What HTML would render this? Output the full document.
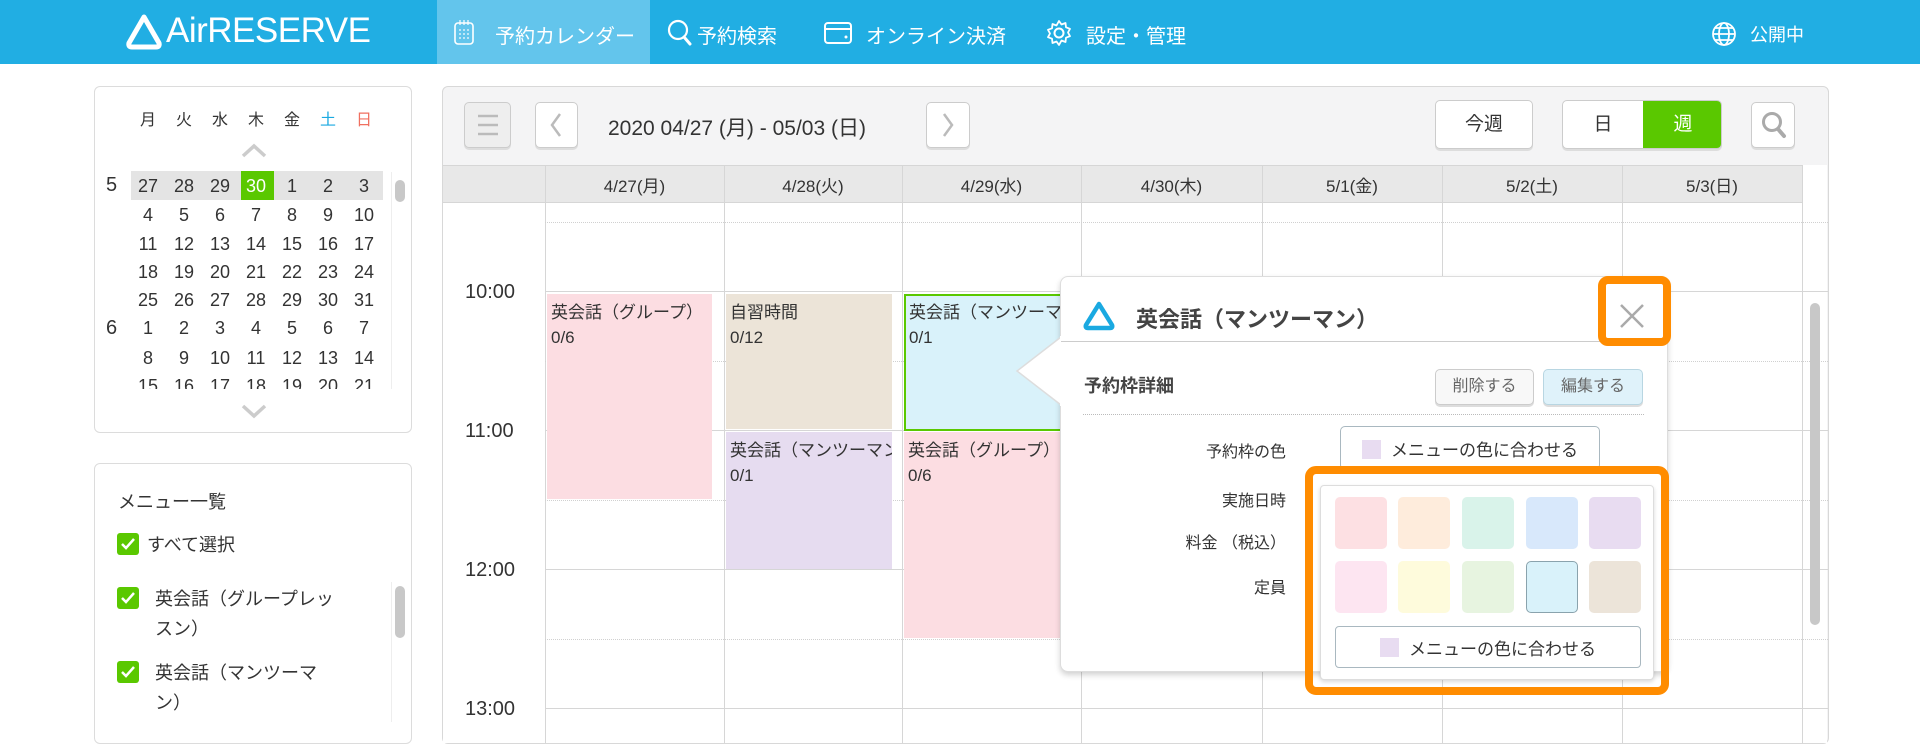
<!DOCTYPE html>
<html><head><meta charset="utf-8">
<style>
*{box-sizing:border-box;margin:0;padding:0}
body{width:1920px;height:750px;overflow:hidden;background:#fff;font-family:"Liberation Sans","Noto Sans CJK JP",sans-serif;color:#333;position:relative}
.a{position:absolute}
.hdr{left:0;top:0;width:1920px;height:64px;background:#21aee3}
.nav{color:#fff;font-size:20px;top:20px}
.card{border:1px solid #dcdcdc;border-radius:6px;background:#fff}
.btn{border:1px solid #ccc;border-radius:5px;background:#fff;box-shadow:0 2px 0 #ddd}
.ev{font-size:17px;line-height:25px;padding:6px 4px;overflow:hidden;white-space:nowrap}
.sw{width:52px;height:52px;border-radius:5px}
.cb{width:22px;height:22px;background:#5ac800;border-radius:3px}
.cb svg{position:absolute;left:3px;top:4px}
</style></head><body>
<div class="a hdr"></div>
<svg class="a" style="left:126px;top:13px" width="36" height="38" viewBox="0 0 36 38"><path d="M18 4 L33 30 Q34 34 30 34 L6 34 Q2 34 3 30 Z" fill="none" stroke="#fff" stroke-width="5" stroke-linejoin="round"/></svg>
<div class="a" style="left:166px;top:11px;color:#fff;font-size:35px;letter-spacing:-0.5px">AirRESERVE</div>
<div class="a" style="left:437px;top:0;width:213px;height:64px;background:#63c5ec"></div>
<svg class="a" style="left:454px;top:20px" width="20" height="26" viewBox="0 0 20 26"><rect x="1" y="3" width="18" height="21" rx="3" fill="none" stroke="#fff" stroke-width="1.6"/><g fill="#fff"><circle cx="6" cy="10" r=".9"/><circle cx="10" cy="10" r=".9"/><circle cx="14" cy="10" r=".9"/><circle cx="6" cy="14" r=".9"/><circle cx="10" cy="14" r=".9"/><circle cx="14" cy="14" r=".9"/><circle cx="6" cy="18" r=".9"/><circle cx="10" cy="18" r=".9"/><circle cx="14" cy="18" r=".9"/></g><path d="M6 0v5M10 0v5M14 0v5" stroke="#fff" stroke-width="1.2"/></svg>
<div class="a nav" style="left:495px">予約カレンダー</div>
<svg class="a" style="left:667px;top:19px" width="28" height="28" viewBox="0 0 28 28"><circle cx="11" cy="11" r="9" fill="none" stroke="#fff" stroke-width="2.2"/><path d="M17 18l6 7" stroke="#fff" stroke-width="3" stroke-linecap="round"/></svg>
<div class="a nav" style="left:697px">予約検索</div>
<svg class="a" style="left:824px;top:22px" width="28" height="22" viewBox="0 0 28 22"><rect x="1" y="1" width="26" height="20" rx="3" fill="none" stroke="#fff" stroke-width="2"/><path d="M1 7h26" stroke="#fff" stroke-width="2"/><circle cx="22" cy="15" r="1.5" fill="#fff"/></svg>
<div class="a nav" style="left:866px">オンライン決済</div>
<svg class="a" style="left:1045px;top:19px" width="28" height="28" viewBox="0 0 28 28"><circle cx="14" cy="14" r="4.5" fill="none" stroke="#fff" stroke-width="2"/><path d="M14 2l2.5 3.5 4-1.5.5 4.3 4 1.5-2 3.7 2 3.7-4 1.5-.5 4.3-4-1.5L14 26l-2.5-3.5-4 1.5-.5-4.3-4-1.5 2-3.7-2-3.7 4-1.5.5-4.3 4 1.5z" fill="none" stroke="#fff" stroke-width="1.8" stroke-linejoin="round"/></svg>
<div class="a nav" style="left:1086px">設定・管理</div>
<svg class="a" style="left:1711px;top:21px" width="26" height="26" viewBox="0 0 26 26" fill="none" stroke="#fff" stroke-width="1.8"><circle cx="13" cy="13" r="11"/><ellipse cx="13" cy="13" rx="5" ry="11"/><path d="M2 13h22M4 7h18M4 19h18"/></svg>
<div class="a nav" style="left:1750px;font-size:18px;top:21px">公開中</div>

<!-- mini calendar -->
<div class="a card" style="left:94px;top:86px;width:318px;height:347px"></div>
<div class="a" style="left:131px;top:171px;width:252px;height:29px;background:#e4e4e4"></div>
<div class="a" style="left:241px;top:171px;width:33px;height:29px;background:#5ac800"></div>
<div id="mc"></div>
<svg class="a" style="left:240px;top:143px" width="28" height="16"><path d="M3 13L14 3l11 10" fill="none" stroke="#ccc" stroke-width="3.5"/></svg>
<svg class="a" style="left:240px;top:403px" width="28" height="16"><path d="M3 3l11 10 11-10" fill="none" stroke="#ccc" stroke-width="3.5"/></svg>
<div class="a" style="left:395px;top:180px;width:10px;height:22px;border-radius:5px;background:#c8c8c8"></div>
<div class="a" style="left:391px;top:172px;width:1px;height:217px;background:#eee"></div>

<!-- menu card -->
<div class="a card" style="left:94px;top:463px;width:318px;height:281px"></div>
<div class="a" style="left:118px;top:488px;font-size:18px">メニュー一覧</div>
<div class="a cb" style="left:117px;top:533px"><svg width="16" height="14"><path d="M2 7l4 4 8-9" fill="none" stroke="#fff" stroke-width="2.5"/></svg></div>
<div class="a" style="left:147px;top:531px;font-size:18px">すべて選択</div>
<div class="a cb" style="left:117px;top:587px"><svg width="16" height="14"><path d="M2 7l4 4 8-9" fill="none" stroke="#fff" stroke-width="2.5"/></svg></div>
<div class="a" style="left:155px;top:584px;font-size:18px;line-height:30px;width:181px">英会話（グループレッスン）</div>
<div class="a cb" style="left:117px;top:661px"><svg width="16" height="14"><path d="M2 7l4 4 8-9" fill="none" stroke="#fff" stroke-width="2.5"/></svg></div>
<div class="a" style="left:155px;top:658px;font-size:18px;line-height:30px;width:181px">英会話（マンツーマン）</div>
<div class="a" style="left:391px;top:582px;width:1px;height:140px;background:#eee"></div>
<div class="a" style="left:395px;top:586px;width:10px;height:52px;border-radius:5px;background:#c8c8c8"></div>

<!-- main panel -->
<div class="a" style="left:442px;top:86px;width:1387px;height:658px;border:1px solid #d8d8d8;border-radius:6px;background:#f4f4f5;overflow:hidden">
</div>
<div class="a btn" style="left:464px;top:102px;width:47px;height:46px;background:#eee"></div>
<svg class="a" style="left:477px;top:113px" width="22" height="24"><path d="M1 3h20M1 12h20M1 21h20" stroke="#bbb" stroke-width="2.5"/></svg>
<div class="a btn" style="left:535px;top:102px;width:43px;height:46px"></div>
<svg class="a" style="left:548px;top:112px" width="16" height="26"><path d="M12 2L4 13l8 11" fill="none" stroke="#bbb" stroke-width="2.5"/></svg>
<div class="a" style="left:608px;top:112px;font-size:21px">2020 04/27 (月) - 05/03 (日)</div>
<div class="a btn" style="left:926px;top:102px;width:44px;height:46px"></div>
<svg class="a" style="left:940px;top:112px" width="16" height="26"><path d="M4 2l8 11-8 11" fill="none" stroke="#bbb" stroke-width="2.5"/></svg>
<div class="a btn" style="left:1435px;top:100px;width:98px;height:49px;text-align:center;line-height:47px;font-size:19px">今週</div>
<div class="a btn" style="left:1562px;top:100px;width:160px;height:49px;overflow:hidden"><div class="a" style="left:0;top:0;width:80px;height:47px;text-align:center;line-height:47px;font-size:19px">日</div><div class="a" style="left:80px;top:0;width:80px;height:47px;background:#5ac800;color:#fff;text-align:center;line-height:47px;font-size:19px">週</div></div>
<div class="a btn" style="left:1751px;top:102px;width:44px;height:46px"></div>
<svg class="a" style="left:1760px;top:110px" width="28" height="30"><circle cx="12" cy="12" r="8.5" fill="none" stroke="#aaa" stroke-width="3"/><path d="M18 19l6 7" stroke="#aaa" stroke-width="4" stroke-linecap="round"/></svg>

<!-- grid -->
<div class="a" style="left:443px;top:165px;width:1384px;height:578px;background:#fff"></div>
<div class="a" style="left:443px;top:165px;width:1359px;height:38px;background:#e8e8e8;border-top:1px solid #d6d6d6;border-bottom:1px solid #d6d6d6"></div>
<div class="a" style="left:443px;top:203px;width:102px;height:540px;background:#fff"></div>
<div id="grid"></div>
<div class="a" style="left:1810px;top:303px;width:10px;height:322px;border-radius:5px;background:#c8c8c8"></div>

<div class="a" style="left:465px;top:281px;font-size:20px">10:00</div>
<div class="a" style="left:465px;top:420px;font-size:20px">11:00</div>
<div class="a" style="left:465px;top:559px;font-size:20px">12:00</div>
<div class="a" style="left:465px;top:698px;font-size:20px">13:00</div>

<div class="a ev" style="left:547px;top:294px;width:165px;height:205px;background:#fcdde2">英会話（グループ）<br>0/6</div>
<div class="a ev" style="left:726px;top:294px;width:166px;height:135px;background:#ece4d8">自習時間<br>0/12</div>
<div class="a ev" style="left:726px;top:432px;width:166px;height:137px;background:#e6dcf0">英会話（マンツーマン）<br>0/1</div>
<div class="a ev" style="left:904px;top:294px;width:170px;height:137px;background:#d9f2fa;border:2px solid #5ac800;padding:4px 3px">英会話（マンツーマン）<br>0/1</div>
<div class="a ev" style="left:904px;top:432px;width:170px;height:206px;background:#fcdde2">英会話（グループ）<br>0/6</div>

<!-- popup -->
<div class="a" style="left:1060px;top:276px;width:608px;height:396px;background:#fff;border:1px solid #ddd;border-radius:8px;box-shadow:0 3px 6px rgba(0,0,0,.18)"></div>
<svg class="a" style="left:1014px;top:336px" width="48" height="70"><path d="M47 1L3 35l44 34" fill="#fff" stroke="#ddd" stroke-width="1.5"/><rect x="46" y="0" width="3" height="70" fill="#fff"/></svg>
<svg class="a" style="left:1082px;top:300px" width="34" height="32" viewBox="0 0 34 32"><path d="M17 4L30 25Q31 28 28 28L6 28Q3 28 4 25Z" fill="none" stroke="#1aa9e1" stroke-width="4.5" stroke-linejoin="round"/></svg>
<div class="a" style="left:1136px;top:302px;font-size:22px;font-weight:bold;color:#444">英会話（マンツーマン）</div>
<div class="a" style="left:1061px;top:341px;width:606px;height:1px;background:#ccc"></div>
<div class="a" style="left:1598px;top:276px;width:73px;height:70px;border:8px solid #ff8c00;border-radius:10px"></div>
<svg class="a" style="left:1618px;top:302px" width="28" height="28"><path d="M3 3l22 22M25 3L3 25" stroke="#aaa" stroke-width="2.5"/></svg>
<div class="a" style="left:1084px;top:372px;font-size:18px;font-weight:bold;color:#444">予約枠詳細</div>
<div class="a btn" style="left:1435px;top:369px;width:99px;height:36px;font-size:16px;text-align:center;line-height:34px;color:#666;background:#f8f8f8">削除する</div>
<div class="a btn" style="left:1543px;top:369px;width:100px;height:36px;font-size:16px;text-align:center;line-height:34px;color:#666;background:#dff2fa;border-color:#b8d6e2">編集する</div>
<div class="a" style="left:1083px;top:414px;width:561px;border-top:1px dotted #bbb"></div>
<div class="a" style="left:1186px;top:438px;width:100px;text-align:right;font-size:16px">予約枠の色</div>
<div class="a" style="left:1186px;top:487px;width:100px;text-align:right;font-size:16px">実施日時</div>
<div class="a" style="left:1160px;top:529px;width:126px;text-align:right;font-size:16px">料金 （税込）</div>
<div class="a" style="left:1186px;top:574px;width:100px;text-align:right;font-size:16px">定員</div>
<div class="a" style="left:1340px;top:426px;width:260px;height:44px;border:1px solid #a9b8c0;border-radius:5px;background:#fff"></div>
<div class="a" style="left:1362px;top:440px;width:19px;height:19px;background:#e8dcf1"></div>
<div class="a" style="left:1391px;top:436px;font-size:17px">メニューの色に合わせる</div>

<div class="a" style="left:1305px;top:466px;width:364px;height:229px;border:8px solid #ff8c00;border-radius:11px"></div>
<div class="a" style="left:1320px;top:485px;width:334px;height:195px;background:#fff;border:1px solid #ddd;border-radius:4px;box-shadow:0 2px 4px rgba(0,0,0,.15)"></div>
<div class="a sw" style="left:1335px;top:497px;background:#fde0e3"></div>
<div class="a sw" style="left:1398px;top:497px;background:#feecdc"></div>
<div class="a sw" style="left:1462px;top:497px;background:#d9f3ea"></div>
<div class="a sw" style="left:1526px;top:497px;background:#d8e8fb"></div>
<div class="a sw" style="left:1589px;top:497px;background:#e8dcf1"></div>
<div class="a sw" style="left:1335px;top:561px;background:#fde5f1"></div>
<div class="a sw" style="left:1398px;top:561px;background:#fefbdc"></div>
<div class="a sw" style="left:1462px;top:561px;background:#e7f4e0"></div>
<div class="a sw" style="left:1526px;top:561px;background:#d9f2fa;border:1px solid #8aa3ad"></div>
<div class="a sw" style="left:1589px;top:561px;background:#ece4d9"></div>
<div class="a" style="left:1335px;top:626px;width:306px;height:42px;border:1px solid #a9b8c0;border-radius:4px;background:#fff"></div>
<div class="a" style="left:1380px;top:638px;width:19px;height:19px;background:#e8dcf1"></div>
<div class="a" style="left:1409px;top:635px;font-size:17px">メニューの色に合わせる</div>

<script>
(function(){
var cx=[148,184,220,256,292,328,364],ry=[186,215,244,272,300,328,358,386];
var rows=[[27,28,29,30,1,2,3],[4,5,6,7,8,9,10],[11,12,13,14,15,16,17],[18,19,20,21,22,23,24],[25,26,27,28,29,30,31],[1,2,3,4,5,6,7],[8,9,10,11,12,13,14],[15,16,17,18,19,20,21]];
var h='',wd=['月','火','水','木','金','土','日'];
for(var i=0;i<7;i++){var c=i==5?'#1aa9e1':i==6?'#f07060':'#333';h+='<div class="a" style="left:'+(cx[i]-12)+'px;top:106px;width:24px;text-align:center;font-size:16px;color:'+c+'">'+wd[i]+'</div>';}
h+='<div class="a" style="left:94px;top:160px;width:300px;height:229px;overflow:hidden">';
for(var r=0;r<8;r++)for(var i=0;i<7;i++){var col=(r==0&&i==3)?'#fff':'#333';h+='<div class="a" style="left:'+(cx[i]-94-18)+'px;top:'+(ry[r]-160-11)+'px;width:36px;text-align:center;font-size:18px;line-height:22px;color:'+col+'">'+rows[r][i]+'</div>';}
h+='<div class="a" style="left:12px;top:14px;font-size:20px">5</div><div class="a" style="left:12px;top:157px;font-size:20px">6</div></div>';
document.getElementById('mc').innerHTML=h;
var g='',xs=[545,724,902,1081,1262,1442,1622,1802],d=['4/27(月)','4/28(火)','4/29(水)','4/30(木)','5/1(金)','5/2(土)','5/3(日)'];
for(var i=0;i<7;i++)g+='<div class="a" style="left:'+xs[i]+'px;top:172px;width:'+(xs[i+1]-xs[i])+'px;text-align:center;font-size:17px">'+d[i]+'</div>';
for(var i=0;i<8;i++)g+='<div class="a" style="left:'+xs[i]+'px;top:165px;width:1px;height:578px;background:#d6d6d6"></div>';
[291,430,569,708].forEach(function(y){g+='<div class="a" style="left:545px;top:'+y+'px;width:1283px;height:1px;background:#d6d6d6"></div>';});
[222,361,500,639].forEach(function(y){g+='<div class="a" style="left:545px;top:'+y+'px;width:1283px;border-top:1px dotted #d0d0d0"></div>';});
document.getElementById('grid').innerHTML=g;
})();
</script>
</body></html>
